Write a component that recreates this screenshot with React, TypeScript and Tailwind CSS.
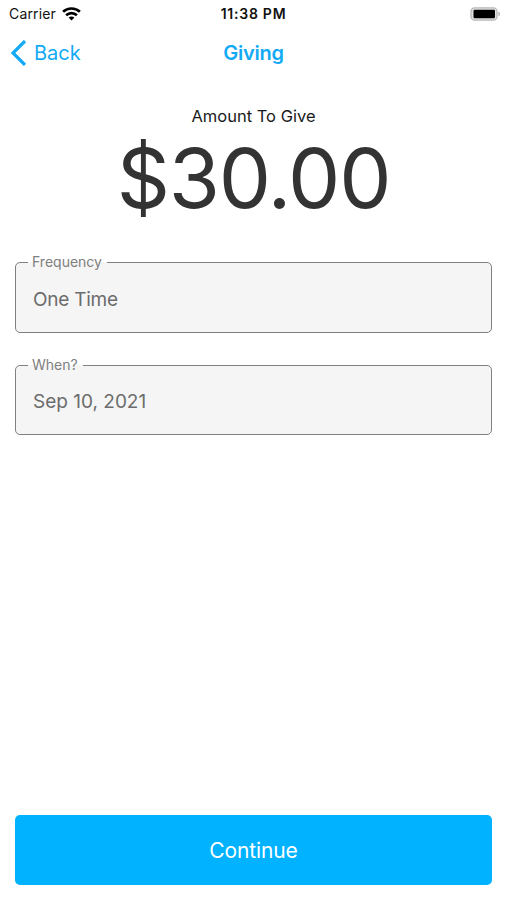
import React from "react";

type FieldProps = { label: string; value: string; className?: string; valueClass: string };

function OutlinedField({ label, value, className = "", valueClass }: FieldProps) {
  return (
    <fieldset className={`min-w-0 rounded-[5px] border border-[#808080] bg-[#f5f5f5] pl-[12px] ${className}`}>
      <legend className="h-[17px] pl-[4px] pr-[5px] text-[14px] text-[#808080]">
        <span className="block whitespace-nowrap leading-[15px]">{label}</span>
      </legend>
      <div className={`pl-[5px] text-[19px] leading-[26px] text-[#6c6c6c] ${valueClass}`}>{value}</div>
    </fieldset>
  );
}

function WifiIcon() {
  return (
    <svg width="19" height="14" viewBox="0 0 19 14" fill="none" stroke="#000" strokeWidth="2.6">
      <path d="M1.1 4.8C5.7.4 13.3.4 17.9 4.8" />
      <path d="M4.1 8.3c3-2.9 7.8-2.9 10.8 0" />
      <path d="M9.5 13.5 6.6 10.6c1.6-1.5 4.2-1.5 5.8 0Z" fill="#000" stroke="none" />
    </svg>
  );
}

function BatteryIcon() {
  return (
    <svg width="31" height="14" viewBox="0 0 31 14" fill="none">
      <rect x="1" y="0.8" width="26" height="12.4" rx="3.6" fill="#e2e2e2" stroke="#b8b8b8" strokeWidth="1.3" />
      <rect x="3.5" y="2.8" width="21.5" height="8.4" rx="1.2" fill="#000" />
      <path d="M28.4 4.8c2.2.6 2.2 3.8 0 4.4Z" fill="#b5b5b5" />
    </svg>
  );
}

export default function App() {
  return (
    <div className="flex h-[900px] w-[507px] flex-col overflow-hidden bg-white font-['Inter','Liberation_Sans',sans-serif]">
      <header className="grid h-[27px] shrink-0 grid-cols-3 items-center text-[14px] leading-[27px] text-[#111]">
        <div className="flex items-center pl-[9px]">
          <span className="w-[53px] tracking-[0.15px]">Carrier</span>
          <WifiIcon />
        </div>
        <span className="text-center font-semibold tracking-[0.75px]">11:38 PM</span>
        <div className="flex justify-end pr-[6px]">
          <BatteryIcon />
        </div>
      </header>

      <nav className="grid h-[51px] shrink-0 grid-cols-3 items-center text-[20px] text-[#12aaf5]">
        <button className="flex items-center pl-[10px]">
          <svg width="17" height="26" viewBox="0 0 17 26" fill="none" stroke="currentColor" strokeWidth="3.2">
            <path d="M15 1 3 13l12 12" />
          </svg>
          <span className="pl-[7px]">Back</span>
        </button>
        <h1 className="text-center font-semibold tracking-[-0.2px]">Giving</h1>
      </nav>

      <main className="flex flex-1 flex-col px-[15px]">
        <p className="mt-[26px] text-center text-[16.5px] leading-[24px] text-[#1a1a1a]">Amount To Give</p>
        <p className="h-[100px] text-center text-[83px] leading-[100px] tracking-[-1.3px] text-[#333]">$30.00</p>
        <OutlinedField label="Frequency" value="One Time" className="mt-[26px] h-[79px]" valueClass="pt-[16px] tracking-[-0.25px]" />
        <OutlinedField label="When?" value="Sep 10, 2021" className="mt-[24px] h-[78px]" valueClass="pt-[15px]" />
        <button className="mb-[15px] mt-auto h-[70px] rounded-[5px] bg-[#00b2ff] pt-[2px] text-[21px] tracking-[-0.1px] text-white">Continue</button>
      </main>
    </div>
  );
}
